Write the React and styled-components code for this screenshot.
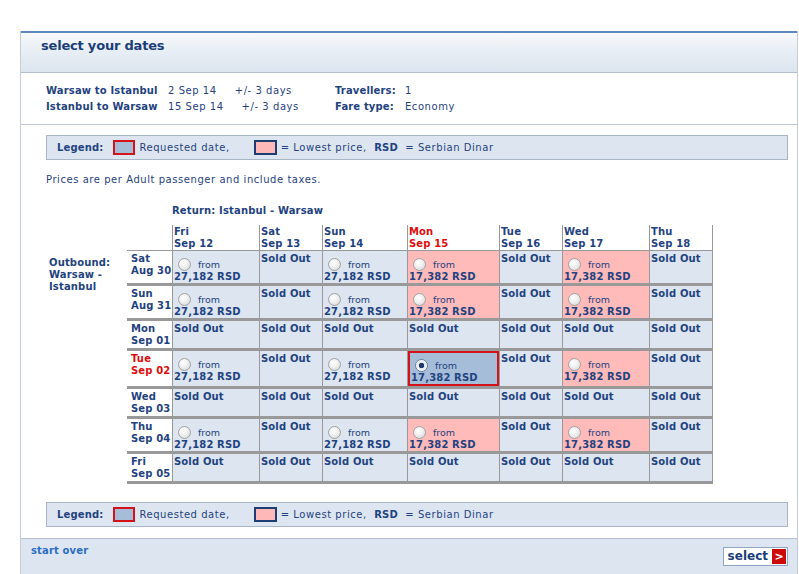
import React from "react";
import styled, { createGlobalStyle } from "styled-components";

const GlobalStyle = createGlobalStyle`
  html, body { margin: 0; padding: 0; background: #fff; }
  body {
    font-family: "DejaVu Sans", Verdana, sans-serif;
    font-size: 10px;
    letter-spacing: 0.55px;
    color: #1f437f;
  }
`;

const INK = "#1f437f";
const RED = "#e00d0d";
const LINE = "#999";

const Page = styled.div`
  padding: 31px 0 0 20px;
`;

const Panel = styled.div`
  width: 778px;
  box-sizing: border-box;
  border-left: 1px solid #c5cdd7;
  border-right: 1px solid #c5cdd7;
`;

const Header = styled.div`
  height: 34px;
  padding: 5px 0 0 20px;
  border-top: 2px solid #5e88bd;
  border-bottom: 1px solid #b4c0cf;
  background: linear-gradient(to bottom, #f8fafc 0%, #e8eef5 45%, #dce5ef 100%);
`;

const Title = styled.h1`
  margin: 0;
  font-size: 13px;
  line-height: 16px;
  letter-spacing: -0.2px;
  font-weight: bold;
  color: #1b3e78;
`;

const Info = styled.div`
  display: grid;
  grid-template-columns: 122px 167px 70px auto;
  padding: 10px 0 9px 25px;
  line-height: 16px;
  border-bottom: 1px solid #c0c8d2;
`;

const Label = styled.span`
  font-weight: bold;
  letter-spacing: 0.15px;
`;

const Range = styled.span`
  margin-left: 18px;
`;

const Body = styled.div`
  padding: 10px 9px 0 25px;
`;

const LegendBox = styled.div`
  height: 25px;
  padding: 0 0 1px 10px;
  box-sizing: border-box;
  border: 1px solid #a9b6c6;
  background: #dde6f0;
  display: flex;
  align-items: center;
  white-space: pre;
  margin-top: ${(p) => p.$top || 0}px;
`;

const Swatch = styled.span`
  width: ${(p) => p.$w}px;
  height: 15px;
  box-sizing: border-box;
  border: 2px solid ${(p) => p.$edge};
  background: ${(p) => p.$fill};
  margin: 0 ${(p) => p.$after}px 0 ${(p) => p.$before}px;
`;

const Note = styled.p`
  margin: 14px 0 0;
  line-height: 12px;
`;

const Matrix = styled.div`
  display: grid;
  grid-template-columns: 81px 45px 87px 63px 85px 92px 63px 87px 64px;
  margin-top: 19px;
  line-height: 12px;
  font-weight: bold;
  letter-spacing: 0.15px;
`;

const Caption = styled.div`
  grid-column: 3 / -1;
  grid-row: 1;
  padding-bottom: 8px;
`;

const Outbound = styled.div`
  grid-column: 1;
  grid-row: 3 / span 7;
  padding: 6px 0 0 3px;
`;

const Corner = styled.div`
  grid-column: 2;
  grid-row: 2;
  border-bottom: 1px solid ${LINE};
`;

const ColHead = styled.div`
  grid-row: 2;
  grid-column: ${(p) => p.$col};
  padding: 1px 0 0 1px;
  border-left: 1px solid ${LINE};
  border-right: ${(p) => (p.$last ? `1px solid ${LINE}` : "none")};
  border-bottom: 1px solid ${LINE};
  color: ${(p) => (p.$red ? RED : INK)};
`;

const RowHead = styled.div`
  grid-column: 2;
  grid-row: ${(p) => p.$row};
  padding: 2px 0 1px 4px;
  border-bottom: 3px solid ${LINE};
  color: ${(p) => (p.$red ? RED : INK)};
`;

const Cell = styled.div`
  grid-row: ${(p) => p.$row};
  grid-column: ${(p) => p.$col};
  border-left: 1px solid ${LINE};
  border-right: ${(p) => (p.$last ? `1px solid ${LINE}` : "none")};
  border-bottom: 3px solid ${LINE};
  background: ${(p) => (p.$pink ? "#ffbaba" : "#dce5f0")};
  display: flex;
`;

const Fare = styled.div`
  flex: 1;
  padding: ${(p) => (p.$picked ? "1px 0 0" : "2px 0 0")};
  border: ${(p) => (p.$picked ? `2px solid #d3121a` : "none")};
  background: ${(p) => (p.$picked ? "#a6bdd9" : "transparent")};
`;

const RadioLine = styled.div`
  height: 18px;
  display: flex;
  align-items: flex-end;
`;

const Radio = styled.span`
  width: 13px;
  height: 13px;
  box-sizing: border-box;
  border-radius: 50%;
  border: 1px solid ${(p) => (p.$on ? "#6b7c93" : "#a3a3a3")};
  background: ${(p) =>
    p.$on
      ? "radial-gradient(circle, #1d3a6c 0 2.5px, #dfe6ee 3px, #fff 6px)"
      : "radial-gradient(circle at 40% 35%, #ffffff 0, #f1f1f1 40%, #d2d2d2 100%)"};
  align-self: flex-start;
  margin: 5px 7px 0 5px;
`;

const From = styled.span`
  font-weight: normal;
  font-size: 9.5px;
  letter-spacing: 0;
  line-height: 12px;
`;

const Price = styled.div`
  padding-left: 1px;
`;

const SoldOut = styled.div`
  padding: 2px 0 0 1px;
`;

const Footer = styled.div`
  margin-top: 11px;
  height: 36px;
  box-sizing: border-box;
  padding: 6px 9px 0 10px;
  border-top: 1px solid #b4c0cf;
  background: #dde6f0;
  display: flex;
  justify-content: space-between;
  align-items: flex-start;
`;

const StartOver = styled.a`
  font-weight: bold;
  letter-spacing: 0.15px;
  line-height: 12px;
  color: #2c6cc4;
  text-decoration: none;
`;

const SelectButton = styled.button`
  margin-top: 2px;
  height: 19px;
  padding: 1px;
  display: flex;
  align-items: stretch;
  border: 1px solid #8ea5c6;
  background: #fff;
  font-family: inherit;
  cursor: pointer;
`;

const SelectText = styled.span`
  padding: 0 4px 0 3px;
  font-size: 12px;
  line-height: 15px;
  letter-spacing: 0;
  font-weight: bold;
  color: #1b3e78;
`;

const Arrow = styled.span`
  width: 14px;
  background: #cc0a0a;
  color: #fff;
  font-size: 11px;
  line-height: 15px;
  font-weight: bold;
  text-align: center;
`;

const columns = [
  { day: "Fri", date: "Sep 12" },
  { day: "Sat", date: "Sep 13" },
  { day: "Sun", date: "Sep 14" },
  { day: "Mon", date: "Sep 15", red: true },
  { day: "Tue", date: "Sep 16" },
  { day: "Wed", date: "Sep 17" },
  { day: "Thu", date: "Sep 18" },
];

// A = 27,182 blue, B = 17,382 pink (lowest), S = sold out
const pattern = ["A", "S", "A", "B", "S", "B", "S"];
const sold = ["S", "S", "S", "S", "S", "S", "S"];

const rows = [
  { day: "Sat", date: "Aug 30", cells: pattern },
  { day: "Sun", date: "Aug 31", cells: pattern },
  { day: "Mon", date: "Sep 01", cells: sold },
  { day: "Tue", date: "Sep 02", cells: pattern, red: true, picked: 3 },
  { day: "Wed", date: "Sep 03", cells: sold },
  { day: "Thu", date: "Sep 04", cells: pattern },
  { day: "Fri", date: "Sep 05", cells: sold },
];

function Legend({ top }) {
  return (
    <LegendBox $top={top}>
      <Label>Legend:</Label>
      <Swatch $w={22} $edge="#d3121a" $fill="#a6bdd9" $before={10} $after={4} />
      <span>Requested date,</span>
      <Swatch $w={23} $edge="#1c3d72" $fill="#ffb8b8" $before={24} $after={4} />
      <span>= Lowest price,  </span>
      <Label>RSD</Label>
      <span>  = Serbian Dinar</span>
    </LegendBox>
  );
}

function FareCell({ kind, row, col, last, picked }) {
  if (kind === "S") {
    return (
      <Cell $row={row} $col={col} $last={last}>
        <SoldOut>Sold Out</SoldOut>
      </Cell>
    );
  }
  const pink = kind === "B";
  return (
    <Cell $row={row} $col={col} $last={last} $pink={pink}>
      <Fare $picked={picked}>
        <RadioLine>
          <Radio $on={picked} />
          <From>from</From>
        </RadioLine>
        <Price>{pink ? "17,382 RSD" : "27,182 RSD"}</Price>
      </Fare>
    </Cell>
  );
}

export default function App() {
  return (
    <Page>
      <GlobalStyle />
      <Panel>
        <Header>
          <Title>select your dates</Title>
        </Header>

        <Info>
          <Label>Warsaw to Istanbul</Label>
          <span>
            2 Sep 14<Range>+/- 3 days</Range>
          </span>
          <Label>Travellers:</Label>
          <span>1</span>
          <Label>Istanbul to Warsaw</Label>
          <span>
            15 Sep 14<Range>+/- 3 days</Range>
          </span>
          <Label>Fare type:</Label>
          <span>Economy</span>
        </Info>

        <Body>
          <Legend top={0} />
          <Note>Prices are per Adult passenger and include taxes.</Note>

          <Matrix>
            <Caption>Return: Istanbul - Warsaw</Caption>
            <Corner />
            {columns.map((c, i) => (
              <ColHead
                key={c.date}
                $col={i + 3}
                $red={c.red}
                $last={i === columns.length - 1}
              >
                {c.day}
                <br />
                {c.date}
              </ColHead>
            ))}
            <Outbound>
              Outbound:
              <br />
              Warsaw -
              <br />
              Istanbul
            </Outbound>
            {rows.map((r, ri) => (
              <React.Fragment key={r.date}>
                <RowHead $row={ri + 3} $red={r.red}>
                  {r.day}
                  <br />
                  {r.date}
                </RowHead>
                {r.cells.map((k, i) => (
                  <FareCell
                    key={i}
                    kind={k}
                    row={ri + 3}
                    col={i + 3}
                    last={i === r.cells.length - 1}
                    picked={r.picked === i}
                  />
                ))}
              </React.Fragment>
            ))}
          </Matrix>

          <Legend top={18} />
        </Body>

        <Footer>
          <StartOver href="#">start over</StartOver>
          <SelectButton type="button">
            <SelectText>select</SelectText>
            <Arrow>&gt;</Arrow>
          </SelectButton>
        </Footer>
      </Panel>
    </Page>
  );
}
